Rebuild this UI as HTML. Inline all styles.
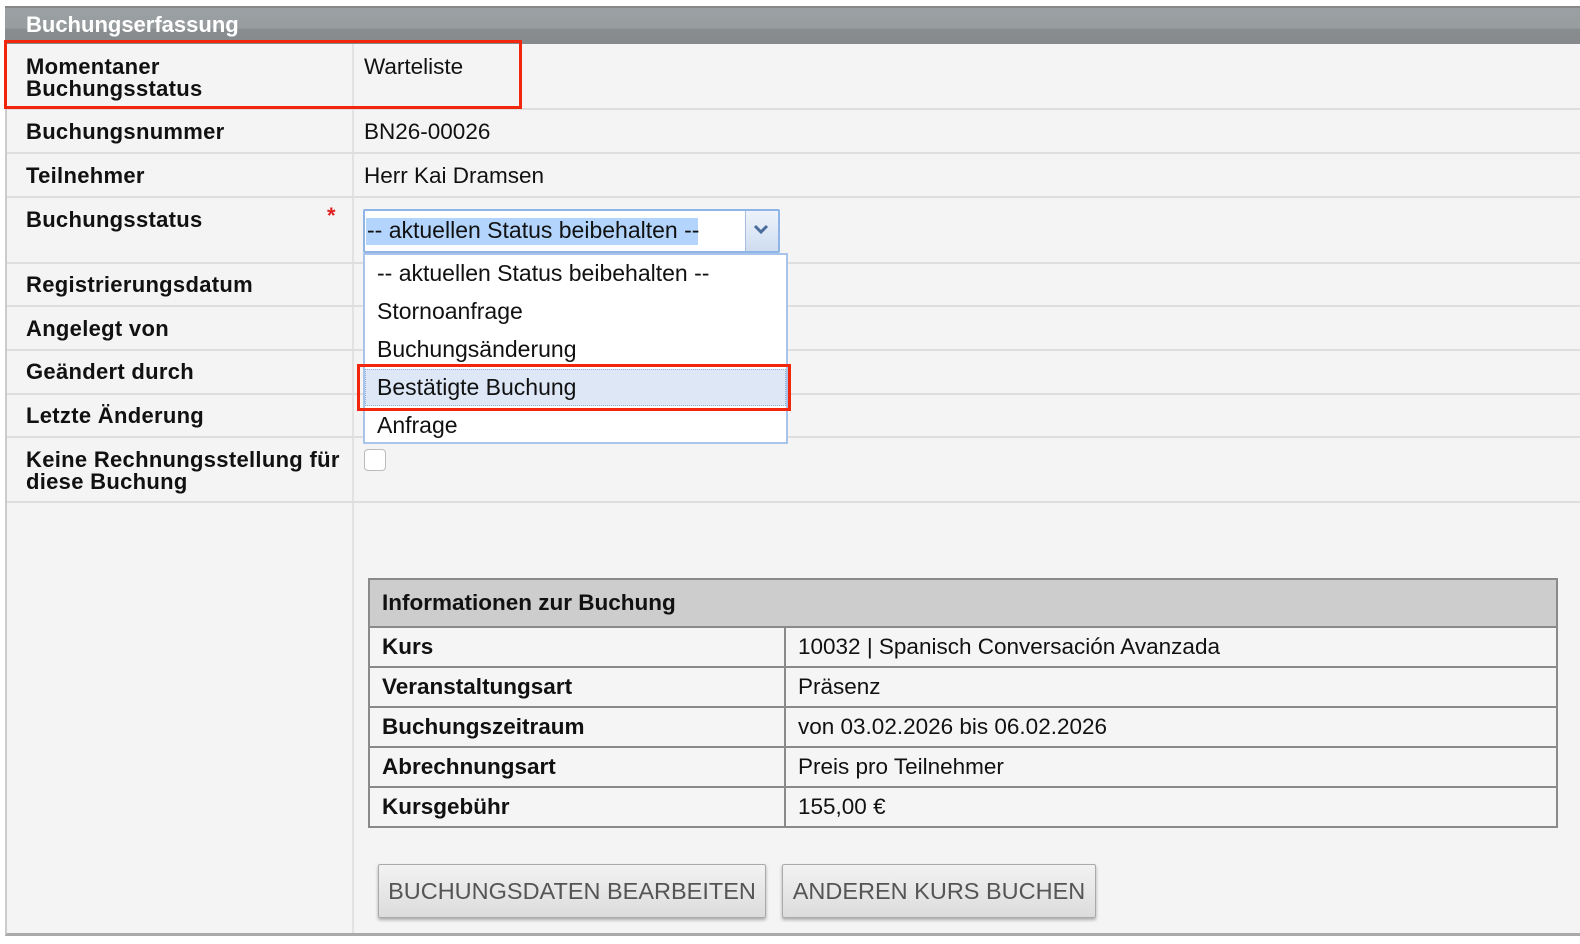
<!DOCTYPE html>
<html><head><meta charset="utf-8"><style>
*{margin:0;padding:0;box-sizing:border-box}
body{width:1580px;height:944px;background:#fff;font-family:"Liberation Sans",Arial,sans-serif;position:relative;overflow:hidden;color:#111}
.a{position:absolute}
.hdr{left:5px;top:6px;width:1575px;height:38px;background:linear-gradient(#9aa0a3 0,#989d9f 55%,#888c8e 60%,#868a8c 100%);border-top:2px solid #888}
.hdr span{position:absolute;left:21px;top:4px;color:#fff;font-weight:bold;font-size:22px}
.page{left:5px;top:44px;width:1575px;height:892px;background:#f4f4f4;border-left:2px solid #ccc;border-bottom:3px solid #aaa}
.hl{left:7px;height:2px;width:1573px;background:#dedede}
.vl{left:352px;top:44px;width:2px;height:889px;background:#e2e2e2}
.lb{left:26px;font-weight:bold;font-size:22px;line-height:22px;letter-spacing:0.3px}
.vv{left:364px;font-size:22.5px}
table{border-collapse:collapse;font-size:22.5px}
td{border:2px solid #8a8a8a;padding:0 12px;height:40px;background:#f5f5f5}
td.h{background:#cdcdcd;font-weight:bold;height:48px}
.btn{border:1px solid #aaa;background:linear-gradient(#f2f2f2,#dcdcdc);box-shadow:0 2px 3px rgba(0,0,0,.3);color:#555;font-size:23.5px;text-align:center;line-height:52px;border-radius:2px}
.red{border:3px solid #f2260d}
.dd{font-size:23px}
</style></head><body>
<div class="a hdr"><span>Buchungserfassung</span></div>
<div class="a page"></div>
<div class="a vl"></div>
<div class="a hl" style="top:108px"></div>
<div class="a hl" style="top:152px"></div>
<div class="a hl" style="top:196px"></div>
<div class="a hl" style="top:262px"></div>
<div class="a hl" style="top:305px"></div>
<div class="a hl" style="top:349px"></div>
<div class="a hl" style="top:393px"></div>
<div class="a hl" style="top:436px"></div>
<div class="a hl" style="top:501px"></div>

<div class="a lb" style="top:56px">Momentaner<br>Buchungsstatus</div>
<div class="a vv" style="top:54px">Warteliste</div>
<div class="a red" style="left:4px;top:40px;width:518px;height:69px"></div>
<div class="a lb" style="top:121px">Buchungsnummer</div>
<div class="a vv" style="top:119px">BN26-00026</div>
<div class="a lb" style="top:165px">Teilnehmer</div>
<div class="a vv" style="top:163px">Herr Kai Dramsen</div>
<div class="a lb" style="top:209px">Buchungsstatus</div>
<div class="a" style="left:327px;top:203px;color:#e02020;font-size:22px;font-weight:bold">*</div>
<div class="a lb" style="top:274px">Registrierungsdatum</div>
<div class="a lb" style="top:318px">Angelegt von</div>
<div class="a lb" style="top:361px">Geändert durch</div>
<div class="a lb" style="top:405px">Letzte Änderung</div>
<div class="a lb" style="top:449px">Keine Rechnungsstellung für<br>diese Buchung</div>
<div class="a" style="left:364px;top:449px;width:22px;height:22px;border:1px solid #bbb;border-radius:4px;background:#fff"></div>

<!-- select -->
<div class="a" style="left:363px;top:209px;width:417px;height:44px;border:2px solid #8fb4e6;background:#fff;border-radius:2px"></div>
<div class="a" style="left:366px;top:218px;width:332px;height:27px;background:#b3d4fc"></div>
<div class="a dd" style="left:367px;top:217px">-- aktuellen Status beibehalten --</div>
<div class="a" style="left:745px;top:211px;width:33px;height:40px;background:linear-gradient(#eef3fb,#cfddf0);border-left:1px solid #a7bedf"></div>
<svg class="a" style="left:752px;top:222px" width="18" height="14"><path d="M3 4 L9 10 L15 4" stroke="#4a6c9c" stroke-width="3" fill="none"/></svg>
<div class="a" style="left:363px;top:253px;width:425px;height:191px;border:2px solid #a9c4ea;background:#fff"></div>
<div class="a dd" style="left:377px;top:260px">-- aktuellen Status beibehalten --</div>
<div class="a dd" style="left:377px;top:298px">Stornoanfrage</div>
<div class="a dd" style="left:377px;top:336px">Buchungsänderung</div>
<div class="a" style="left:365px;top:369px;width:421px;height:37px;background:#dde7f6;border:1px dotted #8fb0e0"></div>
<div class="a dd" style="left:377px;top:374px">Bestätigte Buchung</div>
<div class="a dd" style="left:377px;top:412px">Anfrage</div>
<div class="a red" style="left:357px;top:364px;width:434px;height:47px"></div>

<table class="a" style="left:368px;top:578px;width:1190px">
<tr><td class="h" colspan="2">Informationen zur Buchung</td></tr>
<tr><td style="width:416px;font-weight:bold">Kurs</td><td>10032 | Spanisch Conversación Avanzada</td></tr>
<tr><td style="font-weight:bold">Veranstaltungsart</td><td>Präsenz</td></tr>
<tr><td style="font-weight:bold">Buchungszeitraum</td><td>von 03.02.2026 bis 06.02.2026</td></tr>
<tr><td style="font-weight:bold">Abrechnungsart</td><td>Preis pro Teilnehmer</td></tr>
<tr><td style="font-weight:bold">Kursgebühr</td><td>155,00 €</td></tr>
</table>
<div class="a btn" style="left:378px;top:864px;width:388px;height:54px">BUCHUNGSDATEN BEARBEITEN</div>
<div class="a btn" style="left:782px;top:864px;width:314px;height:54px">ANDEREN KURS BUCHEN</div>
</body></html>
